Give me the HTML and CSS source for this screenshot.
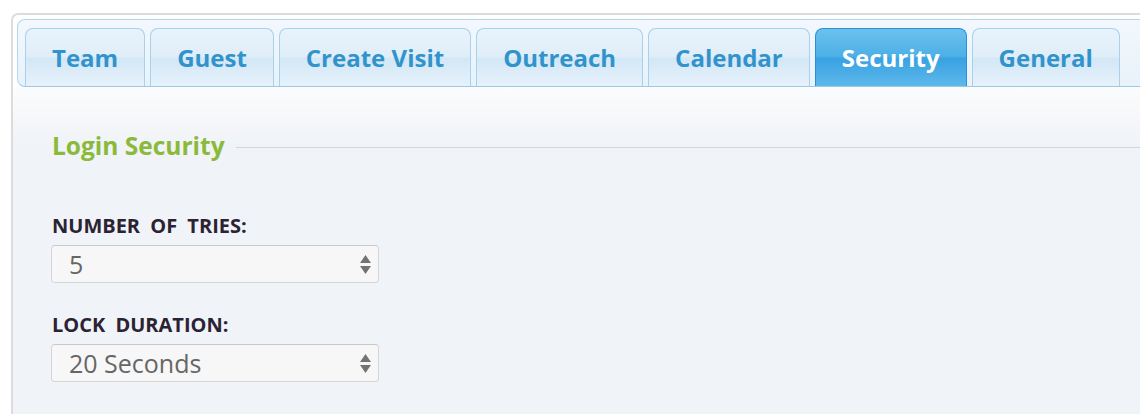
FILE: index.html
```html
<!DOCTYPE html>
<html lang="en">
<head>
  <meta charset="UTF-8" />
  <meta name="viewport" content="width=device-width, initial-scale=1.0" />
  <title>Settings - Security</title>
  <link rel="stylesheet" href="styles.css">
</head>
<body>
  <div class="tabs">
    <ul class="tab-nav">
      <li class="tab">Team</li>
      <li class="tab">Guest</li>
      <li class="tab">Create Visit</li>
      <li class="tab">Outreach</li>
      <li class="tab">Calendar</li>
      <li class="tab active">Security</li>
      <li class="tab">General</li>
    </ul>

    <div class="tab-panel">
      <div class="legend"><span>Login Security</span></div>

      <div class="field first">
        <label for="tries">NUMBER OF TRIES:</label>
        <div class="select-wrap">
          <select id="tries">
            <option>5</option>
          </select>
          <svg class="arrows" width="11" height="19" viewBox="0 0 11 19">
            <path d="M5.5 0 L11 8 L0 8 Z" />
            <path d="M0 11 L11 11 L5.5 19 Z" />
          </svg>
        </div>
      </div>

      <div class="field">
        <label for="duration">LOCK DURATION:</label>
        <div class="select-wrap">
          <select id="duration">
            <option>20 Seconds</option>
          </select>
          <svg class="arrows" width="11" height="19" viewBox="0 0 11 19">
            <path d="M5.5 0 L11 8 L0 8 Z" />
            <path d="M0 11 L11 11 L5.5 19 Z" />
          </svg>
        </div>
      </div>
    </div>
  </div>
</body>
</html>
```

FILE: styles.css
```css
/* Global Styles */
* {
  box-sizing: border-box;
}
body {
  margin: 0;
  font-family: 'Open Sans', sans-serif;
  background-color: #fff;
  overflow: hidden;
}
/* Outer box runs off the right and bottom edge of the window */
.tabs {
  margin: 13px 0 0 11px;
  height: calc(100vh - 13px);
  border: 2px solid #dcdcdc;
  border-right: none;
  border-bottom: none;
  border-radius: 7px 0 0 0;
  background-color: #fff;
  display: flex;
  flex-direction: column;
}
/* Tab strip */
.tab-nav {
  list-style: none;
  margin: 4px 0 0 4px;
  padding: 8px 0 0 7px;
  display: flex;
  gap: 5px;
  border: 1px solid #b2d6ee;
  border-right: none;
  border-bottom-color: #9fc8e3;
  border-radius: 8px 0 0 8px;
  background: linear-gradient(#f2f8fd, #e8f2fa);
}
.tab {
  height: 58px;
  padding: 0 26px 1px;
  display: flex;
  align-items: center;
  border: 1px solid #a9d0ec;
  border-bottom: none;
  border-radius: 8px 8px 0 0;
  font-size: 24px;
  font-weight: 700;
  color: #3193cb;
  background: linear-gradient(#e8f3fb 0%, #e0eef9 48%, #d3e7f6 52%, #e6f2fb 100%);
  cursor: pointer;
}
.tab.active {
  color: #fff;
  border-color: #2a8fd9;
  background: linear-gradient(#6cc1ec 0%, #4cb0e7 48%, #39a2e2 52%, #5db8ea 100%);
}
/* Panel */
.tab-panel {
  flex: 1;
  padding: 44px 0 0 39px;
  background: linear-gradient(#fbfcfd, #f0f3f7 60px);
}
.legend {
  display: flex;
  align-items: center;
  gap: 11px;
  font-size: 24.5px;
  line-height: 30px;
  font-weight: 700;
  color: #8bba3b;
}
.legend::after {
  content: "";
  flex: 1;
  height: 1px;
  margin-top: 2px;
  background-color: #d3d7db;
}
.field {
  margin-top: 30px;
}
.field.first {
  margin-top: 53px;
}
.field label {
  display: block;
  margin-bottom: 7px;
  font-size: 20px;
  line-height: 24px;
  font-weight: 700;
  word-spacing: 5px;
  color: #2b2333;
}
.select-wrap {
  position: relative;
  width: 328px;
  margin-left: -1px;
}
.select-wrap select {
  appearance: none;
  -webkit-appearance: none;
  width: 100%;
  height: 38px;
  padding: 0 40px 0 17px;
  border: 1px solid #d6d6d6;
  border-top-color: #c9c9c9;
  border-radius: 4px;
  background-color: #f7f7f7;
  font-family: 'Open Sans', sans-serif;
  font-size: 25px;
  color: #666;
  outline: none;
}
.arrows {
  position: absolute;
  right: 8px;
  top: 10px;
  fill: #737373;
  pointer-events: none;
}
```
